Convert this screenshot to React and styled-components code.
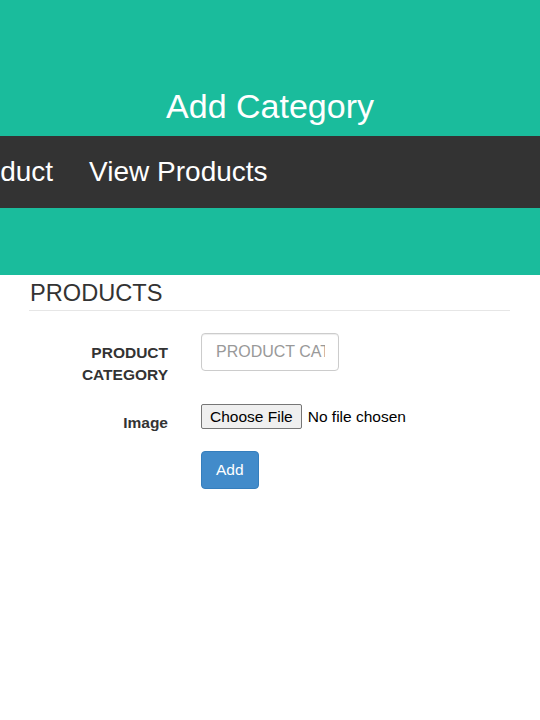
import React from "react";
import styled, { createGlobalStyle } from "styled-components";


const GlobalStyle = createGlobalStyle`
  html, body {
    margin: 0;
    padding: 0;
    background: #fff;
    font-family: "Liberation Sans", Arial, sans-serif;
    color: #333;
  }
`;

const Header = styled.header`
  background: #1abc9c;
  height: 275px;
  padding-top: 86px;
  box-sizing: border-box;
  overflow: hidden;
`;

const Title = styled.h1`
  margin: 0;
  font-size: 34px;
  line-height: 40px;
  font-weight: normal;
  color: #fff;
  text-align: center;
`;

const NavBar = styled.nav`
  margin-top: 10px;
  height: 72px;
  background: #333;
  overflow: hidden;
`;

const NavList = styled.ul`
  display: flex;
  margin: 0 0 0 -119px;
  padding: 0;
  list-style: none;
  white-space: nowrap;
`;

const NavItem = styled.li`
  padding: 0 18px;
  font-size: 28px;
  line-height: 72px;
  color: #fff;
`;

const Main = styled.main`
  margin: 5px 30px 0 29px;
`;

const Heading = styled.h3`
  margin: 0;
  padding: 0 0 4px 1px;
  font-size: 23.6px;
  line-height: 26px;
  font-weight: normal;
  color: #333;
  border-bottom: 1px solid #e6e6e6;
`;

const Form = styled.form`
  display: flex;
  flex-direction: column;
  gap: 15px;
  margin-top: 22px;
`;

const Row = styled.div`
  display: grid;
  grid-template-columns: 139px auto;
  column-gap: 33px;
  align-items: start;
`;

const Label = styled.label`
  padding-top: ${(props) => props.$top}px;
  font-size: 15.5px;
  line-height: 22px;
  font-weight: bold;
  text-align: right;
  color: #333;
`;

const TextInput = styled.input`
  box-sizing: border-box;
  width: 138px;
  height: 38px;
  padding: 0 13px 0 14px;
  border: 1px solid #ccc;
  border-radius: 4px;
  font-family: inherit;
  font-size: 16px;
  color: #555;
  box-shadow: inset 0 1px 1px rgba(0, 0, 0, 0.075);

  &::placeholder {
    color: #999;
  }
`;

const FileControl = styled.div`
  display: flex;
  align-items: center;
  gap: 6px;
  margin-top: 3px;
  font-size: 15.5px;
`;

const FileButton = styled.button`
  box-sizing: border-box;
  height: 25px;
  padding: 0 8px;
  background: #efefef;
  border: 1px solid #767676;
  border-radius: 2px;
  font-family: inherit;
  font-size: 15.5px;
  color: #000;
`;

const FileName = styled.span`
  color: #000;
`;

const SubmitButton = styled.button`
  grid-column: 2;
  justify-self: start;
  box-sizing: border-box;
  height: 38px;
  margin-top: 2px;
  padding: 0 14px;
  background: #428bca;
  border: 1px solid #357ebd;
  border-radius: 4px;
  font-family: inherit;
  font-size: 15.5px;
  color: #fff;
`;


export default function App() {
  return (
    <>
      <GlobalStyle />
      <Header>
        <Title>Add Category</Title>
        <NavBar>
          <NavList>
            <NavItem>Add Product</NavItem>
            <NavItem>View Products</NavItem>
          </NavList>
        </NavBar>
      </Header>
      <Main>
        <Heading>PRODUCTS</Heading>
        <Form onSubmit={(e) => e.preventDefault()}>
          <Row>
            <Label $top={9}>PRODUCT<br />CATEGORY</Label>
            <TextInput placeholder="PRODUCT CATEGORY" />
          </Row>
          <Row>
            <Label $top={11}>Image</Label>
            <FileControl>
              <FileButton type="button">Choose File</FileButton>
              <FileName>No file chosen</FileName>
            </FileControl>
          </Row>
          <Row>
            <SubmitButton type="submit">Add</SubmitButton>
          </Row>
        </Form>
      </Main>
    </>
  );
}
